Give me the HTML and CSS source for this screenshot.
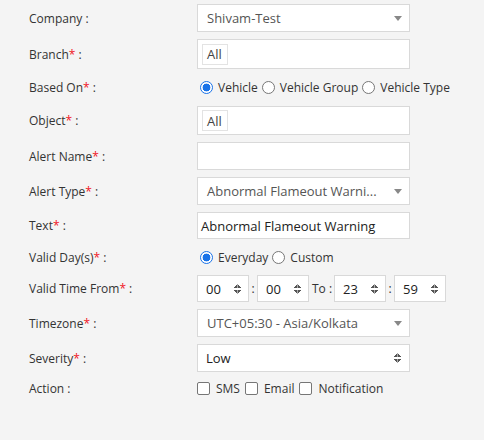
FILE: index.html
```
<!DOCTYPE html>
<html>
<head>
<meta charset="utf-8">
<link rel="stylesheet" href="styles.css">
</head>
<body>
<div class="form">
  <div class="row h28">
    <div class="label">Company :</div>
    <div class="box select2"><span class="val">Shivam-Test</span><span class="caret"></span></div>
  </div>
  <div class="row h30">
    <div class="label">Branch<span class="req">*</span> :</div>
    <div class="box tags"><span class="tag">All</span></div>
  </div>
  <div class="row h23">
    <div class="label">Based On<span class="req">*</span> :</div>
    <div class="choices">
      <span class="radio on"></span><span class="opt">Vehicle</span>
      <span class="radio"></span><span class="opt">Vehicle Group</span>
      <span class="radio"></span><span class="opt">Vehicle Type</span>
    </div>
  </div>
  <div class="row h29">
    <div class="label">Object<span class="req">*</span> :</div>
    <div class="box tags"><span class="tag">All</span></div>
  </div>
  <div class="row h28">
    <div class="label">Alert Name<span class="req">*</span> :</div>
    <div class="box input"></div>
  </div>
  <div class="row h28">
    <div class="label">Alert Type<span class="req">*</span> :</div>
    <div class="box select2"><span class="val">Abnormal Flameout Warni...</span><span class="caret"></span></div>
  </div>
  <div class="row h27">
    <div class="label">Text<span class="req">*</span> :</div>
    <div class="box input"><span class="txt">Abnormal Flameout Warning</span></div>
  </div>
  <div class="row h22">
    <div class="label">Valid Day(s)<span class="req">*</span> :</div>
    <div class="choices">
      <span class="radio on"></span><span class="opt">Everyday</span>
      <span class="radio"></span><span class="opt">Custom</span>
    </div>
  </div>
  <div class="row h27">
    <div class="label">Valid Time From<span class="req">*</span> :</div>
    <div class="times">
      <div class="box num"><span class="val">00</span><span class="spin"></span></div>
      <span class="sep">:</span>
      <div class="box num"><span class="val">00</span><span class="spin"></span></div>
      <span class="to">To :</span>
      <div class="box num"><span class="val">23</span><span class="spin"></span></div>
      <span class="sep">:</span>
      <div class="box num"><span class="val">59</span><span class="spin"></span></div>
    </div>
  </div>
  <div class="row h28">
    <div class="label">Timezone<span class="req">*</span> :</div>
    <div class="box select2"><span class="val">UTC+05:30 - Asia/Kolkata</span><span class="caret"></span></div>
  </div>
  <div class="row h28">
    <div class="label">Severity<span class="req">*</span> :</div>
    <div class="box native"><span class="txt2">Low</span><span class="spin dark"></span></div>
  </div>
  <div class="row h18">
    <div class="label">Action :</div>
    <div class="choices checks">
      <span class="check"></span><span class="opt">SMS</span>
      <span class="check"></span><span class="opt">Email</span>
      <span class="check"></span><span class="opt">Notification</span>
    </div>
  </div>
</div>
</body>
</html>
```
FILE: styles.css
```
html, body {
  margin: 0;
  padding: 0;
  background: #f4f4f4;
}
body {
  width: 484px;
  height: 440px;
  overflow: hidden;
  font-family: "Open Sans", "DejaVu Sans", sans-serif;
  color: #333;
}
.form {
  display: flex;
  flex-direction: column;
  gap: 7px;
  padding: 4px 0 0 29px;
}
.row {
  display: flex;
  align-items: center;
}
.h18 { height: 18px; }
.h22 { height: 22px; }
.h23 { height: 23px; }
.h27 { height: 27px; }
.h28 { height: 28px; }
.h29 { height: 29px; }
.h30 { height: 30px; }
.label {
  width: 168px;
  flex: none;
  font-size: 12px;
  white-space: nowrap;
}
.req {
  color: #f0141e;
}
.box {
  box-sizing: border-box;
  height: 100%;
  background: #fff;
  border: 1px solid #d9d9d9;
  display: flex;
  align-items: center;
  position: relative;
}
.select2, .input, .tags, .native {
  width: 213px;
}
.select2 .val {
  font-size: 13px;
  color: #555;
  padding-left: 9px;
  white-space: nowrap;
}
.caret {
  position: absolute;
  right: 7px;
  top: 50%;
  margin-top: -2px;
  width: 0;
  height: 0;
  border-left: 4px solid transparent;
  border-right: 4px solid transparent;
  border-top: 5px solid #888;
}
.tags {
  padding-left: 4px;
}
.tag {
  box-sizing: border-box;
  height: 21px;
  padding: 0 5px 0 4px;
  border: 1px solid #e3e3e3;
  font-size: 13px;
  color: #444;
  display: flex;
  align-items: center;
}
.input .txt {
  font-size: 13px;
  color: #222;
  padding-left: 3px;
}
.native .txt2 {
  font-size: 13px;
  color: #222;
  padding-left: 8px;
}
.choices {
  display: flex;
  align-items: center;
  font-size: 12px;
  padding-left: 3px;
}
.opt {
  margin: 0 4px 0 5px;
}
.checks {
  padding-left: 0;
}
.checks .opt {
  margin: 0 5px 0 6px;
}
.radio {
  box-sizing: border-box;
  width: 13px;
  height: 13px;
  border-radius: 50%;
  border: 1px solid #767676;
  background: #fff;
  flex: none;
}
.radio.on {
  border: 1.5px solid #1a73e8;
  background: radial-gradient(circle, #1a73e8 0 3.6px, #fff 4.2px);
}
.check {
  box-sizing: border-box;
  width: 13px;
  height: 13px;
  border-radius: 2px;
  border: 1px solid #767676;
  background: #fff;
  flex: none;
}
.times {
  display: flex;
  align-items: center;
  height: 100%;
  font-size: 12px;
}
.num {
  width: 52px;
}
.num .val {
  font-size: 13px;
  color: #222;
  padding-left: 8px;
}
.spin {
  position: absolute;
  right: 7px;
  top: 50%;
  margin-top: -5px;
  width: 7px;
  height: 10px;
  background:
    linear-gradient(to bottom right, transparent 50%, #555 50%) 0 0 / 3.5px 4px no-repeat,
    linear-gradient(to bottom left, transparent 50%, #555 50%) 3.5px 0 / 3.5px 4px no-repeat,
    linear-gradient(to top right, transparent 50%, #555 50%) 0 6px / 3.5px 4px no-repeat,
    linear-gradient(to top left, transparent 50%, #555 50%) 3.5px 6px / 3.5px 4px no-repeat;
}
.spin.dark {
  right: 8px;
}
.sep {
  width: 8px;
  text-align: center;
}
.to {
  margin: 0 2px 0 3px;
  white-space: nowrap;
}
```
